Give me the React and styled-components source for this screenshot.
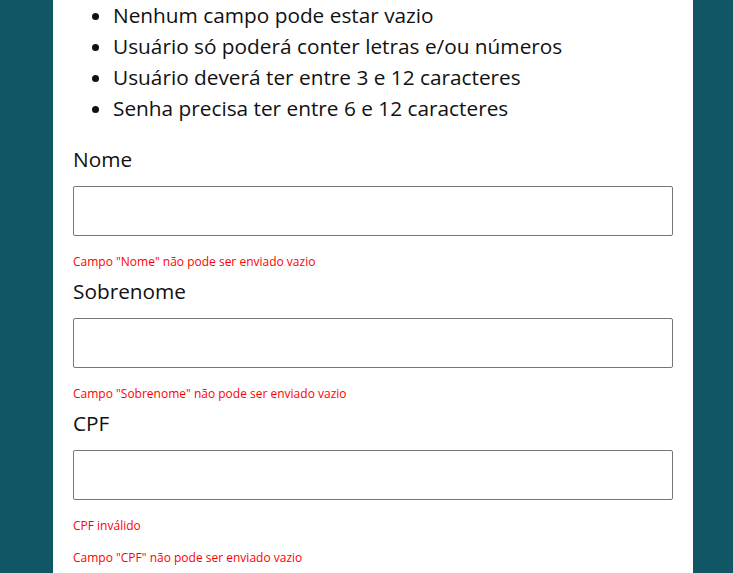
import styled, { createGlobalStyle } from "styled-components";

const GlobalStyle = createGlobalStyle`
    html, body {
        margin: 0;
        padding: 0;
        background: #115665;
        font-family: "Open Sans", "Liberation Sans", sans-serif;
    }
`;

const Page = styled.div`
    display: flex;
    padding: 0 40px 0 53px;
    min-height: 573px;
`;

const Panel = styled.form`
    width: 640px;
    background: #fff;
    padding: 0 20px 20px;
    box-sizing: border-box;
`;

const Rules = styled.ul`
    margin: 0 0 22px;
    padding-left: 40px;
    font-size: 20.8px;
    line-height: 31px;
    color: #111;
`;

const Field = styled.div`
    display: flex;
    flex-direction: column;
    margin-bottom: 9px;
`;

const Label = styled.label`
    font-size: 20.8px;
    line-height: 27px;
    color: #111;
    margin-bottom: 13px;
`;

const Input = styled.input`
    height: 50px;
    box-sizing: border-box;
    border: 1px solid #767676;
    border-radius: 2px;
    padding: 0 10px;
    font-family: inherit;
    font-size: 16px;
    outline: none;
`;

const ErrorText = styled.span`
    display: block;
    font-size: 12px;
    line-height: 15px;
    color: #ff0000;
    margin-top: ${(props) => (props.first ? "18px" : "17px")};
`;

const fields = [
    { id: "nome", label: "Nome", errors: ['Campo "Nome" não pode ser enviado vazio'] },
    { id: "sobrenome", label: "Sobrenome", errors: ['Campo "Sobrenome" não pode ser enviado vazio'] },
    { id: "cpf", label: "CPF", errors: ["CPF inválido", 'Campo "CPF" não pode ser enviado vazio'] },
];

export default function App() {
    return (
        <>
            <GlobalStyle />
            <Page>
                <Panel onSubmit={(e) => e.preventDefault()}>
                    <Rules>
                        <li>Nenhum campo pode estar vazio</li>
                        <li>Usuário só poderá conter letras e/ou números</li>
                        <li>Usuário deverá ter entre 3 e 12 caracteres</li>
                        <li>Senha precisa ter entre 6 e 12 caracteres</li>
                    </Rules>
                    {fields.map((f) => (
                        <Field key={f.id}>
                            <Label htmlFor={f.id}>{f.label}</Label>
                            <Input id={f.id} type="text" />
                            {f.errors.map((err, i) => (
                                <ErrorText key={err} first={i === 0}>
                                    {err}
                                </ErrorText>
                            ))}
                        </Field>
                    ))}
                </Panel>
            </Page>
        </>
    );
}
